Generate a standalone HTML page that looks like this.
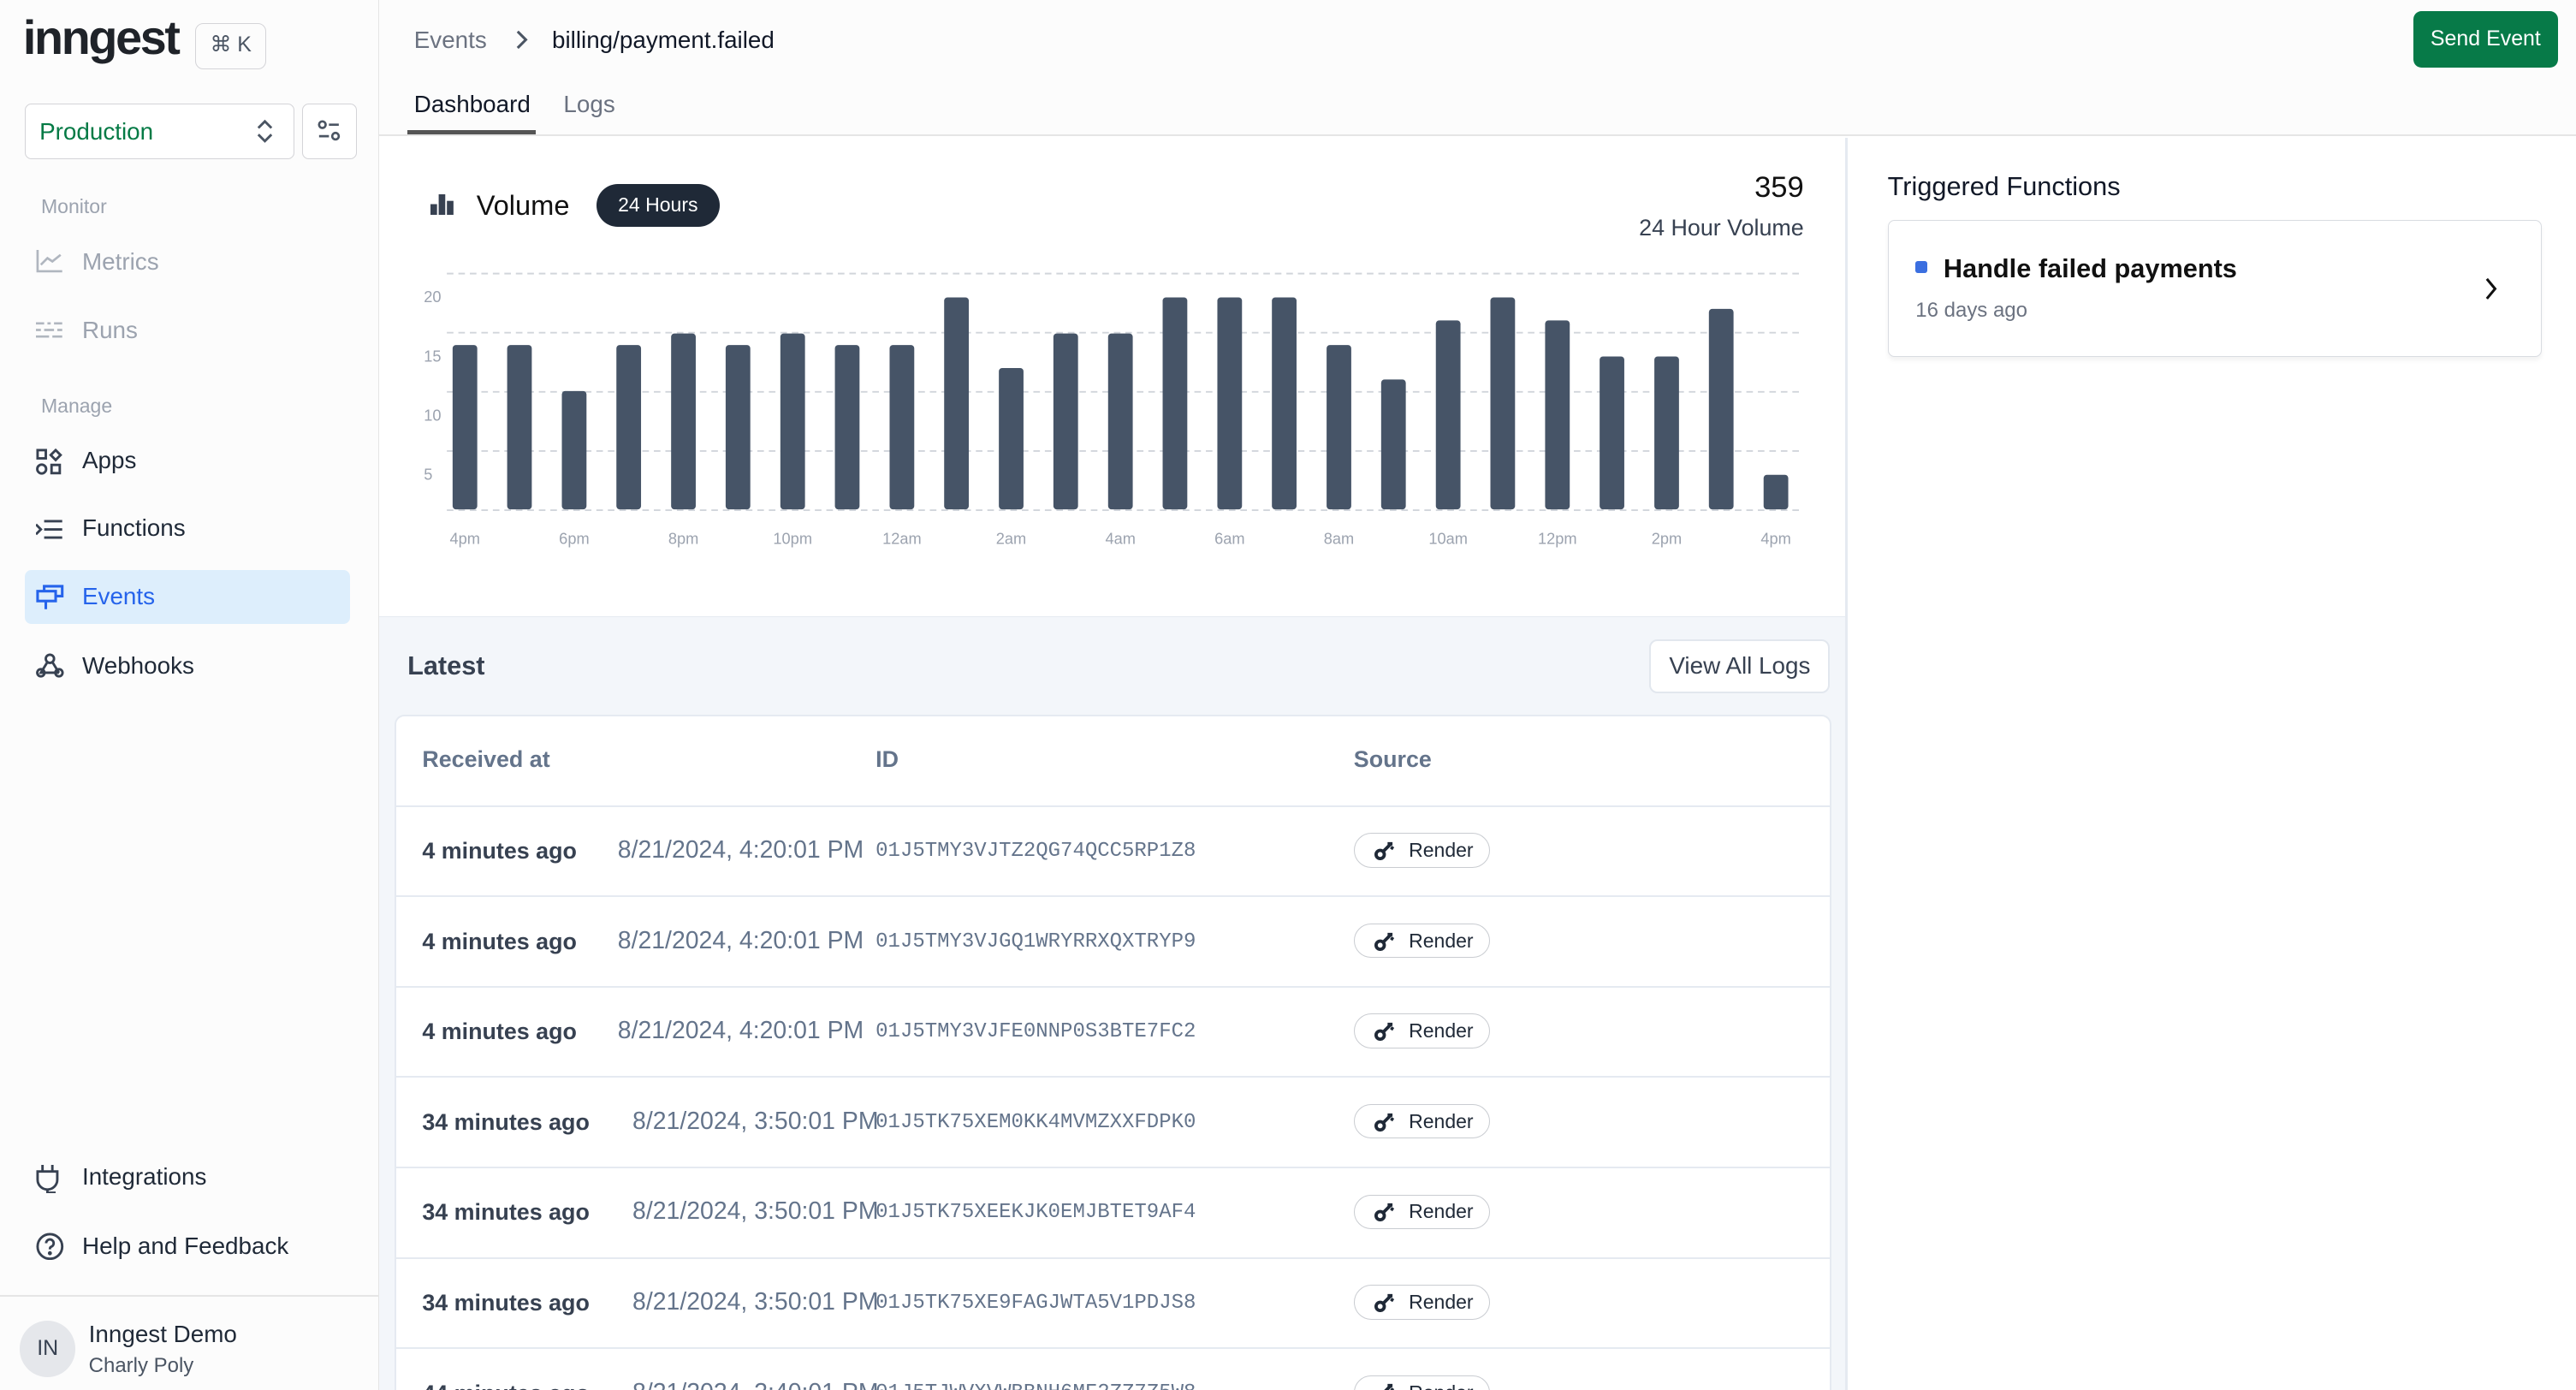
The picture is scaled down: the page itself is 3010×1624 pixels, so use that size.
<!DOCTYPE html>
<html><head><meta charset="utf-8">
<style>
*{box-sizing:border-box;margin:0;padding:0}
html,body{width:3010px;height:1624px;overflow:hidden;background:#fff}
#root{zoom:1.91964;width:1568px;height:846px;position:relative;font-family:"Liberation Sans",sans-serif;color:#1f2937;overflow:hidden}
.a{position:absolute;white-space:nowrap}
.side{position:absolute;left:0;top:0;width:231px;height:846px;background:#fcfcfc;border-right:1px solid #e5e5e5}
.nav{position:absolute;left:50px;font-size:14.5px;color:#1f2937}
.ic{position:absolute;left:22px}
.sec{position:absolute;left:25px;font-size:12px;color:#9ca3af}
.row{position:absolute;left:241px;width:873px;height:55px;border-top:1.5px solid #e5eaf1;background:#fff}
.t1{position:absolute;left:16px;top:19px;font-size:14px;font-weight:bold;color:#374151}
.t2{position:absolute;top:18px;font-size:14.8px;color:#64748b}
.t3{position:absolute;left:292px;top:20px;font-family:"Liberation Mono",monospace;font-size:12.5px;color:#64748b}
.badge{position:absolute;left:583px;top:16px;width:83px;height:21px;border:1px solid #c9ccd1;border-radius:11px;font-size:12px;color:#1f2937}
.badge span{position:absolute;left:33px;top:3px}
.badge svg{position:absolute;left:12px;top:4px}
</style></head><body><div id="root">

<div class="side">
  <div class="a" style="left:14px;top:6px;font-size:29px;font-weight:bold;letter-spacing:-1.2px;color:#1f2329">inngest</div>
  <div class="a" style="left:119px;top:14px;width:43px;height:28px;border:1px solid #d4d4d8;border-radius:5px;font-size:13px;color:#4b5563;text-align:center;line-height:26px">⌘ K</div>
  <div class="a" style="left:15px;top:63px;width:164px;height:34px;border:1px solid #d4d4d8;border-radius:4px;background:#fff"></div>
  <div class="a" style="left:24px;top:72px;font-size:14.5px;color:#047a45">Production</div>
  <svg class="a" style="left:155px;top:72px" width="12" height="16" viewBox="0 0 12 16"><path d="M2 6l4-4 4 4M2 10l4 4 4-4" fill="none" stroke="#4b5563" stroke-width="1.5"/></svg>
  <div class="a" style="left:184px;top:63px;width:33px;height:34px;border:1px solid #d4d4d8;border-radius:4px;background:#fff"></div>
  <svg class="a" style="left:192px;top:72px" width="16" height="16" viewBox="0 0 16 16"><circle cx="4" cy="4" r="2" fill="none" stroke="#4b5563" stroke-width="1.4"/><path d="M8 4h6M2 11h6" stroke="#4b5563" stroke-width="1.4"/><circle cx="12" cy="11" r="2" fill="none" stroke="#4b5563" stroke-width="1.4"/></svg>

  <div class="sec" style="top:119px">Monitor</div>
  <svg class="ic" style="top:152px" width="16" height="14" viewBox="0 0 16 14"><path d="M1 0v13h15M3 9l4-4 3 2 5-4" fill="none" stroke="#b0b6bf" stroke-width="1.4"/></svg>
  <div class="nav" style="top:151px;color:#9ca3af">Metrics</div>
  <svg class="ic" style="top:195px" width="16" height="12" viewBox="0 0 16 12"><path d="M0 2h5M7 2h2M11 2h5M0 6h3M5 6h6M13 6h3M0 10h8M10 10h6" stroke="#b0b6bf" stroke-width="1.4"/></svg>
  <div class="nav" style="top:193px;color:#9ca3af">Runs</div>

  <div class="sec" style="top:240px">Manage</div>
  <svg class="ic" style="top:273px" width="16" height="16" viewBox="0 0 16 16" fill="none" stroke="#374151" stroke-width="1.5"><rect x="1" y="1" width="5" height="5"/><path d="M12 1l3 3-3 3-3-3z"/><circle cx="3.5" cy="12.5" r="2.7"/><rect x="9.5" y="10" width="5" height="5"/></svg>
  <div class="nav" style="top:272px">Apps</div>
  <svg class="ic" style="top:316px" width="16" height="12" viewBox="0 0 16 12" fill="none" stroke="#374151" stroke-width="1.5"><path d="M0 3l3 3-3 3M5 1h11M5 6h11M5 11h11"/></svg>
  <div class="nav" style="top:313px">Functions</div>
  <div class="a" style="left:15px;top:347px;width:198px;height:33px;background:#ddeefc;border-radius:4px"></div>
  <svg class="ic" style="top:356px" width="17" height="16" viewBox="0 0 17 16" fill="none" stroke="#2563eb" stroke-width="1.6"><rect x="1" y="4" width="11" height="6"/><path d="M5 4V1h11v6h-4M6 10v5"/></svg>
  <div class="nav" style="top:355px;color:#2563eb">Events</div>
  <svg class="ic" style="top:397px" width="17" height="16" viewBox="0 0 17 16" fill="none" stroke="#374151" stroke-width="1.5"><circle cx="8.5" cy="4" r="2.5"/><circle cx="3" cy="12.5" r="2.2"/><circle cx="14" cy="12.5" r="2.2"/><path d="M7 6l-4 6.5h11M10 6l4 6.5"/></svg>
  <div class="nav" style="top:397px">Webhooks</div>

  <svg class="ic" style="top:709px" width="14" height="17" viewBox="0 0 14 17" fill="none" stroke="#374151" stroke-width="1.5"><path d="M4 0v4M10 0v4M1 4h12v5a6 6 0 0 1-12 0z M7 15v2h5"/></svg>
  <div class="nav" style="top:708px">Integrations</div>
  <svg class="ic" style="top:750px" width="17" height="17" viewBox="0 0 17 17" fill="none" stroke="#374151" stroke-width="1.5"><circle cx="8.5" cy="8.5" r="7.5"/><path d="M6.2 6.5a2.3 2.3 0 1 1 3 2.2c-.7.3-.7.8-.7 1.5"/><circle cx="8.5" cy="12.6" r=".5" fill="#374151"/></svg>
  <div class="nav" style="top:750px">Help and Feedback</div>

  <div class="a" style="left:0;top:788px;width:230px;height:1px;background:#e5e5e5"></div>
  <div class="a" style="left:12px;top:804px;width:34px;height:34px;border-radius:50%;background:#e5e7eb;font-size:13px;color:#374151;text-align:center;line-height:34px">IN</div>
  <div class="a" style="left:54px;top:804px;font-size:14.5px;color:#1f2937">Inngest Demo</div>
  <div class="a" style="left:54px;top:824px;font-size:12.5px;color:#4b5563">Charly Poly</div>
</div>

<div class="a" style="left:231px;top:0;width:1337px;height:83px;background:#fcfcfc;border-bottom:1.5px solid #e5e5e5"></div>
<div class="a" style="left:252px;top:16px;font-size:14.5px;color:#6b7280">Events</div>
<svg class="a" style="left:313px;top:17px" width="10" height="14" viewBox="0 0 10 14"><path d="M2 2l5 5-5 5" fill="none" stroke="#4b5563" stroke-width="1.6"/></svg>
<div class="a" style="left:336px;top:16px;font-size:14.5px;color:#111827">billing/payment.failed</div>
<div class="a" style="left:252px;top:55px;font-size:14.5px;color:#111827">Dashboard</div>
<div class="a" style="left:343px;top:55px;font-size:14.5px;color:#6b7280">Logs</div>
<div class="a" style="left:248px;top:79px;width:78px;height:3px;background:#555"></div>
<div class="a" style="left:1469px;top:7px;width:88px;height:34px;background:#077a48;border-radius:5px;color:#fff;font-size:13px;text-align:center;line-height:34px">Send Event</div>

<div class="a" style="left:231px;top:84px;width:892px;height:291px;background:#fff"></div>
<svg class="a" style="left:262px;top:118px" width="14" height="13" viewBox="0 0 14 13" fill="#374151"><rect x="0" y="6" width="4" height="7"/><rect x="5" y="0" width="4" height="13"/><rect x="10" y="4" width="4" height="9"/></svg>
<div class="a" style="left:290px;top:115px;font-size:17px;color:#111">Volume</div>
<div class="a" style="left:363px;top:112px;width:75px;height:26px;background:#1f2937;border-radius:13px;color:#fff;font-size:12px;text-align:center;line-height:26px">24 Hours</div>
<div class="a" style="left:1000px;top:104px;width:98px;text-align:right;font-size:18px;color:#111">359</div>
<div class="a" style="left:960px;top:131px;width:138px;text-align:right;font-size:14px;color:#374151">24 Hour Volume</div>

<svg class="a" style="left:0;top:0" width="1568" height="400">
  <g stroke="#d1d5db" stroke-width="1" stroke-dasharray="4,3">
    <line x1="272" y1="166.5" x2="1096" y2="166.5"/>
    <line x1="272" y1="202.5" x2="1096" y2="202.5"/>
    <line x1="272" y1="238.5" x2="1096" y2="238.5"/>
    <line x1="272" y1="274.5" x2="1096" y2="274.5"/>
    <line x1="272" y1="310.5" x2="1096" y2="310.5"/>
  </g>
  <g font-family="Liberation Sans" font-size="9.5" fill="#9ca3af">
    <text x="258" y="184">20</text><text x="258" y="220">15</text><text x="258" y="256">10</text><text x="258" y="292">5</text>
  </g>
  <g fill="#465467">
    <rect x="275.5" y="210" width="15" height="100" rx="2"/>
    <rect x="308.7" y="210" width="15" height="100" rx="2"/>
    <rect x="342" y="238" width="15" height="72" rx="2"/>
    <rect x="375.2" y="210" width="15" height="100" rx="2"/>
    <rect x="408.5" y="203" width="15" height="107" rx="2"/>
    <rect x="441.7" y="210" width="15" height="100" rx="2"/>
    <rect x="475" y="203" width="15" height="107" rx="2"/>
    <rect x="508.2" y="210" width="15" height="100" rx="2"/>
    <rect x="541.5" y="210" width="15" height="100" rx="2"/>
    <rect x="574.7" y="181" width="15" height="129" rx="2"/>
    <rect x="608" y="224" width="15" height="86" rx="2"/>
    <rect x="641.2" y="203" width="15" height="107" rx="2"/>
    <rect x="674.5" y="203" width="15" height="107" rx="2"/>
    <rect x="707.7" y="181" width="15" height="129" rx="2"/>
    <rect x="741" y="181" width="15" height="129" rx="2"/>
    <rect x="774.2" y="181" width="15" height="129" rx="2"/>
    <rect x="807.5" y="210" width="15" height="100" rx="2"/>
    <rect x="840.7" y="231" width="15" height="79" rx="2"/>
    <rect x="874" y="195" width="15" height="115" rx="2"/>
    <rect x="907.2" y="181" width="15" height="129" rx="2"/>
    <rect x="940.5" y="195" width="15" height="115" rx="2"/>
    <rect x="973.7" y="217" width="15" height="93" rx="2"/>
    <rect x="1007" y="217" width="15" height="93" rx="2"/>
    <rect x="1040.2" y="188" width="15" height="122" rx="2"/>
    <rect x="1073.5" y="289" width="15" height="21" rx="2"/>
  </g>
  <g font-family="Liberation Sans" font-size="9.5" fill="#9ca3af" text-anchor="middle">
    <text x="283" y="331">4pm</text><text x="349.5" y="331">6pm</text><text x="416" y="331">8pm</text><text x="482.5" y="331">10pm</text><text x="549" y="331">12am</text><text x="615.5" y="331">2am</text><text x="682" y="331">4am</text><text x="748.5" y="331">6am</text><text x="815" y="331">8am</text><text x="881.5" y="331">10am</text><text x="948" y="331">12pm</text><text x="1014.5" y="331">2pm</text><text x="1081" y="331">4pm</text>
  </g>
</svg>

<div class="a" style="left:231px;top:375px;width:892px;height:471px;background:#f3f6fa;border-top:1px solid #e5eaf1"></div>
<div class="a" style="left:248px;top:396px;font-size:16px;font-weight:bold;color:#374151">Latest</div>
<div class="a" style="left:1004px;top:389px;width:110px;height:33px;background:#fff;border:1.5px solid #e2e7ee;border-radius:5px;font-size:14.5px;color:#374151;text-align:center;line-height:30px">View All Logs</div>
<div class="a" style="left:240px;top:435px;width:875px;height:420px;background:#fff;border:1.5px solid #e5eaf1;border-radius:6px"></div>
<div class="a" style="left:257px;top:454px;font-size:14px;font-weight:bold;color:#64748b">Received at</div>
<div class="a" style="left:533px;top:454px;font-size:14px;font-weight:bold;color:#64748b">ID</div>
<div class="a" style="left:824px;top:454px;font-size:14px;font-weight:bold;color:#64748b">Source</div>

<div class="row" style="top:490px"><div class="t1">4 minutes ago</div><div class="t2" style="left:135px">8/21/2024, 4:20:01 PM</div><div class="t3">01J5TMY3VJTZ2QG74QCC5RP1Z8</div><div class="badge"><svg width="13" height="12" viewBox="0 0 13 12"><circle cx="3.5" cy="8.5" r="2.5" fill="none" stroke="#1f2937" stroke-width="2"/><path d="M5 7l5-5M8 2l3 0M10 4l1.5 1" stroke="#1f2937" stroke-width="2"/></svg><span>Render</span></div></div>
<div class="row" style="top:545px"><div class="t1">4 minutes ago</div><div class="t2" style="left:135px">8/21/2024, 4:20:01 PM</div><div class="t3">01J5TMY3VJGQ1WRYRRXQXTRYP9</div><div class="badge"><svg width="13" height="12" viewBox="0 0 13 12"><circle cx="3.5" cy="8.5" r="2.5" fill="none" stroke="#1f2937" stroke-width="2"/><path d="M5 7l5-5M8 2l3 0M10 4l1.5 1" stroke="#1f2937" stroke-width="2"/></svg><span>Render</span></div></div>
<div class="row" style="top:600px"><div class="t1">4 minutes ago</div><div class="t2" style="left:135px">8/21/2024, 4:20:01 PM</div><div class="t3">01J5TMY3VJFE0NNP0S3BTE7FC2</div><div class="badge"><svg width="13" height="12" viewBox="0 0 13 12"><circle cx="3.5" cy="8.5" r="2.5" fill="none" stroke="#1f2937" stroke-width="2"/><path d="M5 7l5-5M8 2l3 0M10 4l1.5 1" stroke="#1f2937" stroke-width="2"/></svg><span>Render</span></div></div>
<div class="row" style="top:655px"><div class="t1">34 minutes ago</div><div class="t2" style="left:144px">8/21/2024, 3:50:01 PM</div><div class="t3">01J5TK75XEM0KK4MVMZXXFDPK0</div><div class="badge"><svg width="13" height="12" viewBox="0 0 13 12"><circle cx="3.5" cy="8.5" r="2.5" fill="none" stroke="#1f2937" stroke-width="2"/><path d="M5 7l5-5M8 2l3 0M10 4l1.5 1" stroke="#1f2937" stroke-width="2"/></svg><span>Render</span></div></div>
<div class="row" style="top:710px"><div class="t1">34 minutes ago</div><div class="t2" style="left:144px">8/21/2024, 3:50:01 PM</div><div class="t3">01J5TK75XEEKJK0EMJBTET9AF4</div><div class="badge"><svg width="13" height="12" viewBox="0 0 13 12"><circle cx="3.5" cy="8.5" r="2.5" fill="none" stroke="#1f2937" stroke-width="2"/><path d="M5 7l5-5M8 2l3 0M10 4l1.5 1" stroke="#1f2937" stroke-width="2"/></svg><span>Render</span></div></div>
<div class="row" style="top:765px"><div class="t1">34 minutes ago</div><div class="t2" style="left:144px">8/21/2024, 3:50:01 PM</div><div class="t3">01J5TK75XE9FAGJWTA5V1PDJS8</div><div class="badge"><svg width="13" height="12" viewBox="0 0 13 12"><circle cx="3.5" cy="8.5" r="2.5" fill="none" stroke="#1f2937" stroke-width="2"/><path d="M5 7l5-5M8 2l3 0M10 4l1.5 1" stroke="#1f2937" stroke-width="2"/></svg><span>Render</span></div></div>
<div class="row" style="top:820px"><div class="t1">44 minutes ago</div><div class="t2" style="left:144px">8/21/2024, 3:40:01 PM</div><div class="t3">01J5TJWVXVWBBNH6MF2ZZ7Z5W8</div><div class="badge"><svg width="13" height="12" viewBox="0 0 13 12"><circle cx="3.5" cy="8.5" r="2.5" fill="none" stroke="#1f2937" stroke-width="2"/><path d="M5 7l5-5M8 2l3 0M10 4l1.5 1" stroke="#1f2937" stroke-width="2"/></svg><span>Render</span></div></div>

<div class="a" style="left:1123px;top:84px;width:1.5px;height:762px;background:#e5eaf1"></div>
<div class="a" style="left:1149px;top:104px;font-size:16px;color:#111827">Triggered Functions</div>
<div class="a" style="left:1149px;top:134px;width:398px;height:83px;background:#fff;border:1px solid #d9dce1;border-radius:4px;box-shadow:0 2px 3px rgba(0,0,0,0.05)"></div>
<div class="a" style="left:1166px;top:159px;width:7px;height:7px;background:#3b6fe0;border-radius:1.5px"></div>
<div class="a" style="left:1183px;top:154px;font-size:16px;font-weight:bold;color:#111">Handle failed payments</div>
<div class="a" style="left:1166px;top:182px;font-size:12.5px;color:#6b7280">16 days ago</div>
<svg class="a" style="left:1512px;top:169px" width="10" height="14" viewBox="0 0 10 14"><path d="M2 1l5 6-5 6" fill="none" stroke="#111" stroke-width="1.6"/></svg>

</div></body></html>
